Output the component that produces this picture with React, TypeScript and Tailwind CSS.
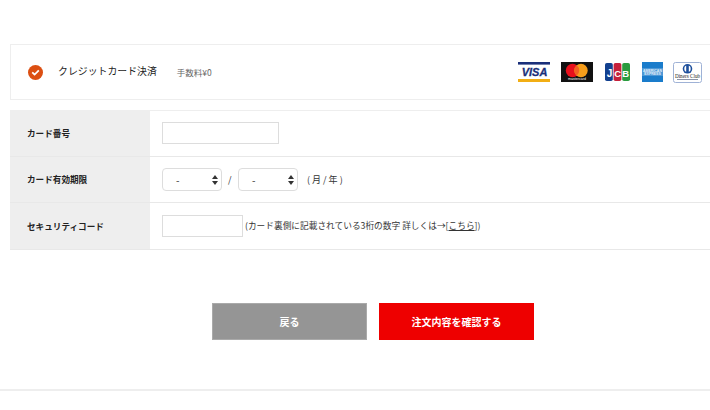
const font = { fontFamily: '"Noto Sans CJK JP", "Liberation Sans", sans-serif' };

function Visa() {
  return (
    <svg width="32" height="20" viewBox="0 0 32 20" className="shrink-0">
      <rect x="0" y="0" width="32" height="2.6" fill="#1a2f7a" />
      <rect x="0" y="17" width="32" height="3" fill="#f2ae14" />
      <text x="16.5" y="14" textAnchor="middle" fontSize="11" fontWeight="700" fontStyle="italic" stroke="#1a2f7a" strokeWidth="0.3" fill="#1a2f7a" fontFamily="Liberation Sans">VISA</text>
    </svg>
  );
}
function Master() {
  return (
    <svg width="32" height="20" viewBox="0 0 32 20" className="shrink-0">
      <rect width="32" height="20" fill="#111" />
      <circle cx="11.5" cy="8.5" r="6.7" fill="#e8101c" />
      <circle cx="20" cy="8.5" r="6.7" fill="#f79e1b" />
      <path d="M15.75 3.3a6.7 6.7 0 0 1 0 10.4a6.7 6.7 0 0 1 0-10.4z" fill="#f26122" />
      <text x="16" y="18.3" textAnchor="middle" fontSize="3.6" fill="#fff" fontFamily="Liberation Sans">mastercard</text>
    </svg>
  );
}
function Jcb() {
  return (
    <svg width="25" height="20" viewBox="0 0 25 20" className="shrink-0">
      <rect x="0" y="1" width="7.8" height="18" rx="1.8" fill="#12408f" />
      <rect x="8.6" y="1" width="7.8" height="18" rx="1.8" fill="#c5203b" />
      <rect x="17.2" y="1" width="7.8" height="18" rx="1.8" fill="#2a9b3f" />
      <text x="4.6" y="14.5" textAnchor="middle" fontSize="10" fontWeight="700" fill="#fff" fontFamily="Liberation Sans">J</text>
      <text x="12.6" y="14.5" textAnchor="middle" fontSize="9.5" fontWeight="700" fill="#fff" fontFamily="Liberation Sans">C</text>
      <text x="20.6" y="14.5" textAnchor="middle" fontSize="9.5" fontWeight="700" fill="#fff" fontFamily="Liberation Sans">B</text>
    </svg>
  );
}
function Amex() {
  return (
    <svg width="21" height="20" viewBox="0 0 21 20" className="shrink-0">
      <rect width="21" height="20" fill="#1a7ccb" />
      <rect y="6" width="21" height="8" fill="#4d98d6" />
      <text x="10.5" y="9.6" textAnchor="middle" fontSize="3.5" fontWeight="700" fill="#e4f1fb" fontFamily="Liberation Sans">AMERICAN</text>
      <text x="10.5" y="13.4" textAnchor="middle" fontSize="3.5" fontWeight="700" fill="#e4f1fb" fontFamily="Liberation Sans">EXPRESS</text>
    </svg>
  );
}
function Diners() {
  return (
    <svg width="29" height="21" viewBox="0 0 29 21" className="shrink-0">
      <rect x="0.5" y="0.5" width="28" height="20" rx="2" fill="#fff" stroke="#9fb2d6" />
      <circle cx="14.5" cy="6.8" r="4.8" fill="#1d4f9c" />
      <circle cx="14.5" cy="6.8" r="3.2" fill="#fff" />
      <rect x="13.2" y="3" width="2.6" height="7.6" fill="#1d4f9c" />
      <text x="14.5" y="15.6" textAnchor="middle" fontSize="5.2" fill="#222" fontFamily="Liberation Serif">Diners Club</text>
      <rect x="4" y="17" width="21" height="1" fill="#8a94a8" />
    </svg>
  );
}

function Select() {
  return (
    <div className="relative h-[23px] w-[60px] rounded-[4px] border border-[#dddddd] bg-white flex items-center pl-[13px] text-[10px] text-[#333]">
      <span>-</span>
      <svg width="6" height="10" viewBox="0 0 6 10" className="absolute right-[3px] top-[6px]">
        <path d="M3 0 6 4H0zM3 10 0 6h6z" fill="#333" />
      </svg>
    </div>
  );
}

function Row({ label, children, className }: { label: string; children: React.ReactNode; className: string }) {
  return (
    <div className={`flex border-b border-[#e8e8e8] ${className}`}>
      <div className="w-[140px] shrink-0 bg-[#eeeeee] pl-[17px] flex items-center text-[8.6px] font-bold text-[#222]">{label}</div>
      <div className="flex-1 pl-[12px] flex items-center text-[8.7px] text-[#333]">{children}</div>
    </div>
  );
}

export default function App() {
  return (
    <div className="w-[710px] h-[410px] bg-white overflow-hidden" style={font}>
      <div className="pl-[10px] pt-[44px]">
        <div className="h-[56px] border border-r-0 border-[#eeeeee] flex items-center pl-[17px] pr-[8px]">
          <span className="w-[15px] h-[15px] rounded-full bg-[#dc4f12] flex items-center justify-center">
            <svg width="9" height="7" viewBox="0 0 9 7"><path d="M1.2 3.3 3.6 5.5 7.8 1.4" fill="none" stroke="#fff" strokeWidth="1.7" /></svg>
          </span>
          <span className="ml-[15px] mb-[2px] text-[9.9px] text-[#222] whitespace-nowrap">クレジットカード決済</span>
          <span className="ml-[20px] text-[8.5px] text-[#666] whitespace-nowrap">手数料¥0</span>
          <div className="ml-auto flex items-center">
            <Visa />
            <div className="ml-[11px]"><Master /></div>
            <div className="ml-[12px]"><Jcb /></div>
            <div className="ml-[12px]"><Amex /></div>
            <div className="ml-[10px]"><Diners /></div>
          </div>
        </div>
        <div className="mt-[10px] border-t border-[#eeeeee]">
          <Row label="カード番号" className="h-[46px]">
            <div className="w-[117px] h-[22px] mb-[1px] border border-[#dddddd]" />
          </Row>
          <Row label="カード有効期限" className="h-[46px]">
            <Select />
            <span className="mx-[6px] w-[4px] text-[9px]">/</span>
            <Select />
            <span className="ml-[9px] text-[9px] whitespace-nowrap">( 月 / 年 )</span>
          </Row>
          <Row label="セキュリティコード" className="h-[47px]">
            <div className="w-[81px] h-[22px] border border-[#dddddd] shrink-0" />
            <span className="ml-[2px] whitespace-nowrap">(カード裏側に記載されている3桁の数字 詳しくは→[<span className="underline">こちら</span>])</span>
          </Row>
        </div>
        <div className="mt-[53px] flex justify-center gap-[12px] pl-[26px]">
          <button className="w-[155px] h-[37px] bg-[#959595] border border-[#aaaaaa] text-white text-[10px] font-bold">戻る</button>
          <button className="w-[155px] h-[37px] bg-[#ee0000] text-white text-[10px] font-bold">注文内容を確認する</button>
        </div>
      </div>
      <div className="mt-[49px] h-[2px] bg-[#eeeeee]" />
    </div>
  );
}
